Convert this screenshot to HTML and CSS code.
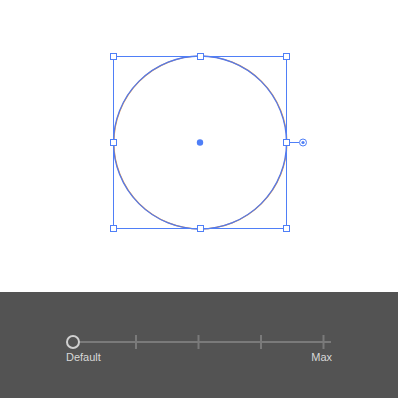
FILE: index.html
```html
<!DOCTYPE html>
<html>
<head>
<meta charset="utf-8">
<link rel="stylesheet" href="styles.css">
</head>
<body>
<div class="page">
  <div class="canvas">
    <svg class="art" width="398" height="292" viewBox="0 0 398 292">
      <circle cx="200" cy="142.5" r="86.5" fill="none" stroke="#f0a040" stroke-width="1.2" transform="translate(0.4,0)"/>
      <circle cx="200" cy="142.5" r="86.5" fill="none" stroke="#5478ea" stroke-width="1.3"/>
      <rect x="113.5" y="56.5" width="173" height="172" fill="none" stroke="#4f7ff7" stroke-width="1"/>
      <line x1="286.5" y1="142.5" x2="299" y2="142.5" stroke="#4f7ff7" stroke-width="1"/>
      <circle cx="303" cy="142.5" r="3.5" fill="#fff" stroke="#4f7ff7" stroke-width="1"/>
      <circle cx="303" cy="142.5" r="1.6" fill="#4f7ff7"/>
      <circle cx="200" cy="142.5" r="3.2" fill="#4f7ff7"/>
      <g fill="#fff" stroke="#4f7ff7" stroke-width="1">
        <rect x="110.5" y="53.5" width="6" height="6"/>
        <rect x="197.5" y="53.5" width="6" height="6"/>
        <rect x="283.5" y="53.5" width="6" height="6"/>
        <rect x="110.5" y="139.5" width="6" height="6"/>
        <rect x="283.5" y="139.5" width="6" height="6"/>
        <rect x="110.5" y="225.5" width="6" height="6"/>
        <rect x="197.5" y="225.5" width="6" height="6"/>
        <rect x="283.5" y="225.5" width="6" height="6"/>
      </g>
    </svg>
  </div>
  <div class="panel">
    <div class="slider">
      <svg class="track" width="280" height="20" viewBox="0 0 280 20">
        <g stroke="#7a7a7a" stroke-width="2">
          <line x1="10" y1="10" x2="274" y2="10"/>
          <line x1="79" y1="3" x2="79" y2="17"/>
          <line x1="141.5" y1="3" x2="141.5" y2="17"/>
          <line x1="204" y1="3" x2="204" y2="17"/>
          <line x1="266.5" y1="3" x2="266.5" y2="17"/>
        </g>
        <circle cx="16" cy="10" r="6" fill="#535353" stroke="#d0d0d0" stroke-width="2"/>
      </svg>
      <div class="labels">
        <span class="label">Default</span>
        <span class="label">Max</span>
      </div>
    </div>
  </div>
</div>
</body>
</html>
```
FILE: styles.css
```css
html, body {
  margin: 0;
  padding: 0;
  background: #ffffff;
}
.page {
  width: 398px;
  height: 398px;
  display: flex;
  flex-direction: column;
  overflow: hidden;
}
.canvas {
  height: 292px;
  background: #ffffff;
}
.art {
  display: block;
}
.panel {
  flex: 1;
  background: #535353;
  padding: 40px 0 0 57px;
}
.slider {
  width: 280px;
  display: flex;
  flex-direction: column;
}
.track {
  display: block;
}
.labels {
  display: flex;
  justify-content: space-between;
  width: 275px;
  padding-left: 9px;
  margin-top: -1px;
  box-sizing: border-box;
  font-family: "Liberation Sans", Arial, sans-serif;
  font-size: 11px;
  line-height: 13px;
  color: #d8d8d8;
}
```
